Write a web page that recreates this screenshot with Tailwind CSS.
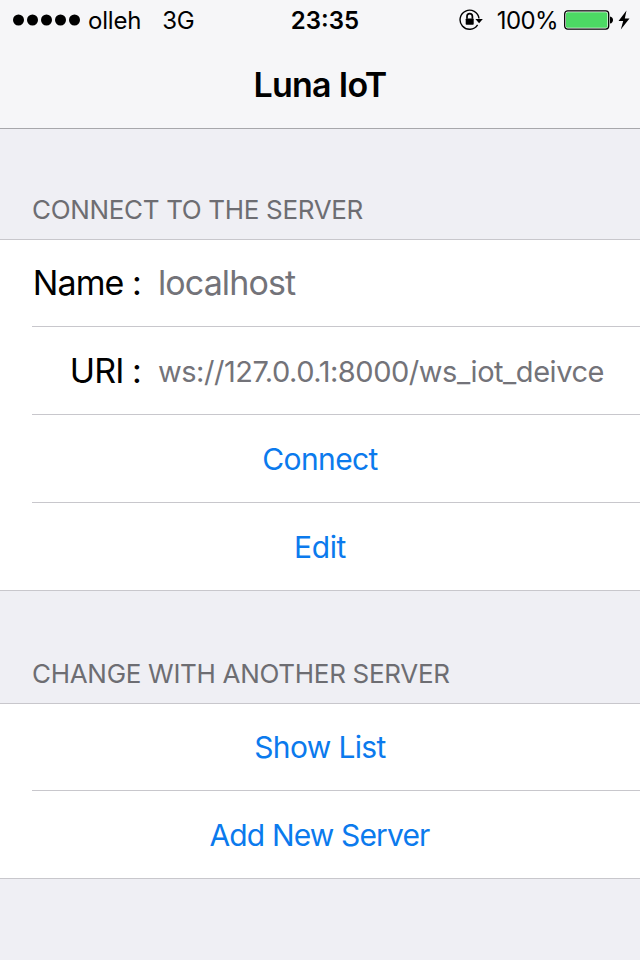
<!DOCTYPE html>
<html lang="en">
<head>
<meta charset="utf-8">
<title>Luna IoT</title>
<script src="https://cdn.jsdelivr.net/npm/@tailwindcss/browser@4"></script>
</head>
<body class="w-[640px] h-[960px] overflow-hidden bg-[#efeff4] font-['Inter','Liberation_Sans',sans-serif] text-black">
<header class="h-[129px] bg-[#f6f6f8] border-b border-[#a7a7ab]">
  <div class="h-10 grid grid-cols-3 items-center text-[24px] leading-[38px] whitespace-nowrap">
    <div class="flex items-center pl-3">
      <svg class="w-[70px] h-[12px] shrink-0" viewBox="0 0 70 12"><circle cx="6.5" cy="6" r="5.5"/><circle cx="20.5" cy="6" r="5.5"/><circle cx="34.5" cy="6" r="5.5"/><circle cx="48.5" cy="6" r="5.5"/><circle cx="62.5" cy="6" r="5.5"/></svg>
      <span class="ml-[6px] pt-[2px] tracking-[-0.2px]">olleh</span>
      <span class="ml-[21px] pt-[2px] tracking-[-0.3px]">3G</span>
    </div>
    <div class="pl-[10px] pt-[2px] text-center font-semibold">23:35</div>
    <div class="flex items-center justify-end pr-[10px]">
      <svg class="w-6 h-[22px] shrink-0" viewBox="0 0 24 22" fill="none" stroke="#000" stroke-width="1.4"><path d="M18.6 15.8A9.5 9.5 0 1 1 20 9.5"/><path d="M16.4 10h7.4l-3.7 4.2z" fill="#000" stroke="none"/><path d="M8 9.8V7.4a2.7 2.7 0 0 1 5.4 0V9.8" stroke-width="1.7"/><rect x="6.7" y="9.5" width="8" height="6.3" rx=".8" fill="#000" stroke="none"/></svg>
      <span class="ml-[14px] pt-[2px] tracking-[-0.6px]">100%</span>
      <svg class="ml-[6px] w-[49px] h-5 shrink-0" viewBox="0 0 49 20"><rect x=".7" y=".9" width="44" height="18.2" rx="3" fill="#fff" stroke="#000" stroke-width="1.3"/><rect x="2" y="2.2" width="41.4" height="15.6" rx="1.6" fill="#4cd964"/><path d="M46 6.4c2 .4 3 1.7 3 3.6s-1 3.2-3 3.6z"/></svg>
      <svg class="ml-[5px] w-3 h-5 shrink-0" viewBox="0 0 12 20"><path d="M8.5.5L.5 11h4.700L2.800 19.500 11.500 8.500H6.800z"/></svg>
    </div>
  </div>
  <h1 class="h-[88px] pt-px text-center text-[34px] leading-[88px] font-semibold tracking-[-0.7px]">Luna IoT</h1>
</header>
<main>
  <section>
    <h2 class="h-[110px] pt-[65px] pl-8 text-[26px] leading-[32px] tracking-[-0.33px] text-[#6d6d72]">CONNECT TO THE SERVER</h2>
    <div class="bg-white border-y border-[#c8c7cc]">
      <div class="ml-8 h-[87px] border-b border-[#c8c7cc] flex items-center pb-[2px] text-[34px] tracking-[-0.9px]">
        <span class="w-[109px] text-right whitespace-nowrap">Name :</span><span class="ml-[17px] text-[#737379]">localhost</span>
      </div>
      <div class="ml-8 h-[88px] border-b border-[#c8c7cc] flex items-center text-[34px] tracking-[-0.9px]">
        <span class="w-[109px] text-right whitespace-nowrap">URI :</span><span class="ml-[17px] pt-[2px] text-[29px] tracking-[-0.47px] whitespace-nowrap text-[#737379]">ws://127.0.0.1:8000/ws_iot_deivce</span>
      </div>
      <div class="ml-8 h-[88px] border-b border-[#c8c7cc]"><button class="block w-full pr-8 text-center text-[30px] leading-[89px] tracking-[-0.6px] text-[#0b7aed]">Connect</button></div>
      <div class="ml-8 h-[87px]"><button class="block w-full pr-8 text-center text-[30px] leading-[89px] tracking-[-0.4px] text-[#0b7aed]">Edit</button></div>
    </div>
  </section>
  <section>
    <h2 class="h-[112px] pt-[67px] pl-8 text-[26px] leading-[32px] tracking-[-0.3px] text-[#6d6d72]">CHANGE WITH ANOTHER SERVER</h2>
    <div class="bg-white border-y border-[#c8c7cc]">
      <div class="ml-8 h-[87px] border-b border-[#c8c7cc]"><button class="block w-full pr-8 text-center text-[30px] leading-[87px] tracking-[-0.65px] text-[#0b7aed]">Show List</button></div>
      <div class="ml-8 h-[87px]"><button class="block w-full pr-[33px] text-center text-[30px] leading-[89px] tracking-[-0.85px] text-[#0b7aed]">Add New Server</button></div>
    </div>
  </section>
</main>
</body>
</html>
